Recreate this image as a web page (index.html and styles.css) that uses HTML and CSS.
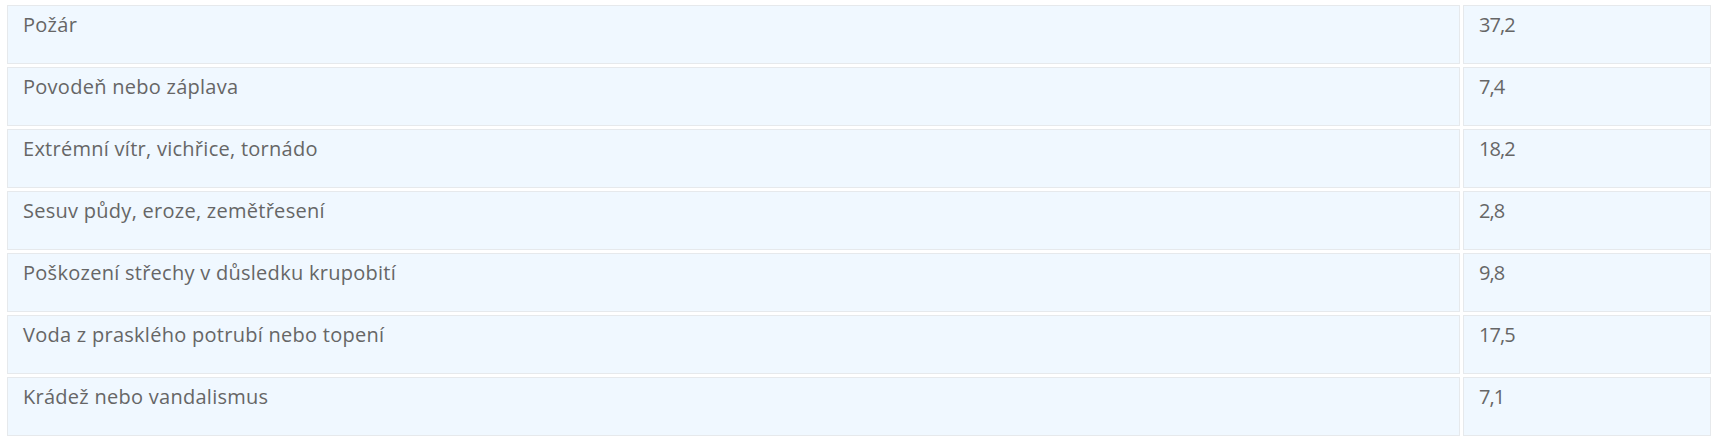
FILE: index.html
```html
<!DOCTYPE html>
<html lang="cs">
<head>
<meta charset="utf-8">
<title>Tabulka</title>
<link rel="stylesheet" href="styles.css">
</head>
<body>
<table class="data">
  <tbody>
    <tr><td class="label">Požár</td><td class="value">37,2</td></tr>
    <tr><td class="label">Povodeň nebo záplava</td><td class="value">7,4</td></tr>
    <tr><td class="label">Extrémní vítr, vichřice, tornádo</td><td class="value">18,2</td></tr>
    <tr><td class="label">Sesuv půdy, eroze, zemětřesení</td><td class="value">2,8</td></tr>
    <tr><td class="label">Poškození střechy v důsledku krupobití</td><td class="value">9,8</td></tr>
    <tr><td class="label">Voda z prasklého potrubí nebo topení</td><td class="value">17,5</td></tr>
    <tr><td class="label">Krádež nebo vandalismus</td><td class="value">7,1</td></tr>
  </tbody>
</table>
</body>
</html>
```
FILE: styles.css
```css
html, body {
  background: #ffffff;
}
body {
  margin: 2px 4px;
  font-family: "Open Sans", "Liberation Sans", sans-serif;
  color: #666666;
}
.data {
  width: 100%;
  table-layout: fixed;
  border-collapse: separate;
  border-spacing: 3px;
}
.data td {
  box-sizing: border-box;
  height: 59px;
  background: #f0f8ff;
  border: 1px solid #e6e9ec;
  padding: 4px 15px 0;
  vertical-align: top;
  font-size: 20px;
  line-height: 30px;
}
.data .label {
  letter-spacing: 0.27px;
}
.data .value {
  width: 248px;
  letter-spacing: -0.9px;
}
```
